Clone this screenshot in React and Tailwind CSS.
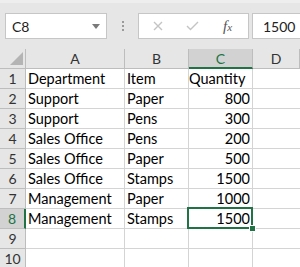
import React from "react";

const cols = [
  { key: "A", w: "w-[99px]" },
  { key: "B", w: "w-[64px]" },
  { key: "C", w: "w-[64px]" },
  { key: "D", w: "flex-1" },
];

const rows = [
  ["Department", "Item", "Quantity"],
  ["Support", "Paper", "800"],
  ["Support", "Pens", "300"],
  ["Sales Office", "Pens", "200"],
  ["Sales Office", "Paper", "500"],
  ["Sales Office", "Stamps", "1500"],
  ["Management", "Paper", "1000"],
  ["Management", "Stamps", "1500"],
  ["", "", ""],
  ["", "", ""],
];

function FormulaBar() {
  return (
    <div className="h-[49px] bg-[#e6e6e6] border-t-[3px] border-[#eeeeee] pt-[10px] flex items-start">
      <div className="ml-[5px] w-[102px] h-[26px] bg-white border border-[#c6c6c6] flex items-center pl-[6px] pr-[6px]">
        <span className="text-[14px] text-[#222]">C8</span>
        <svg className="ml-auto" width="8" height="5" viewBox="0 0 8 5">
          <path d="M0 0 L8 0 L4 5 Z" fill="#7a7a7a" />
        </svg>
      </div>
      <div className="w-[31px] h-[26px] flex flex-col items-center justify-center gap-[2px]">
        <span className="block w-[2px] h-[2px] bg-[#9a9a9a]" />
        <span className="block w-[2px] h-[2px] bg-[#9a9a9a]" />
        <span className="block w-[2px] h-[2px] bg-[#9a9a9a]" />
      </div>
      <div className="w-[111px] h-[26px] bg-white border border-[#c6c6c6] flex items-center">
        <svg className="ml-[14px]" width="10" height="10" viewBox="0 0 10 10">
          <path d="M1 1 L9 9 M9 1 L1 9" stroke="#c4c4c4" strokeWidth="1.4" />
        </svg>
        <svg className="ml-[23px]" width="13" height="10" viewBox="0 0 13 10">
          <path d="M1 5 L4.5 8.5 L12 1" stroke="#c4c4c4" strokeWidth="1.4" fill="none" />
        </svg>
        <span className="ml-[24px] text-[15px] italic text-[#555] font-['Liberation_Serif',serif]">
          f<span className="text-[11px]">x</span>
        </span>
      </div>
      <div className="ml-[3px] flex-1 h-[26px] bg-white border border-r-0 border-[#c6c6c6] flex items-center pl-[10px]">
        <span className="text-[14px] text-[#222]">1500</span>
      </div>
    </div>
  );
}

function HeaderRow() {
  return (
    <div className="flex h-[20px] bg-[#e6e6e6]">
      <div className="w-[26px] h-full border-r border-b border-[#bdbdbd] relative">
        <svg className="absolute right-[2px] bottom-[3px]" width="13" height="13" viewBox="0 0 13 13">
          <path d="M13 0 L13 13 L0 13 Z" fill="#b4b4b4" />
        </svg>
      </div>
      {cols.map((c) => {
        const sel = c.key === "C";
        return (
          <div
            key={c.key}
            className={
              c.w +
              " h-full border-r flex items-center justify-center text-[14px] " +
              (sel
                ? "bg-[#d2d2d2] border-[#bdbdbd] border-b-2 border-b-[#217346] text-[#217346]"
                : "border-[#bdbdbd] border-b text-[#333]")
            }
          >
            {c.key}
          </div>
        );
      })}
    </div>
  );
}

export default function App() {
  return (
    <div className="w-[300px] h-[267px] overflow-hidden bg-white font-['Lato',sans-serif] text-black">
      <FormulaBar />
      <HeaderRow />
      {rows.map((r, i) => {
        const n = i + 1;
        const sel = n === 8;
        return (
          <div key={n} className="flex h-[20px]">
            <div
              className={
                "w-[26px] h-full border-b flex items-center justify-center text-[14px] " +
                (sel
                  ? "bg-[#d2d2d2] border-[#bdbdbd] border-r-2 border-r-[#217346] text-[#217346]"
                  : "bg-[#e6e6e6] border-[#bdbdbd] border-r text-[#333]")
              }
            >
              {n}
            </div>
            <div className="w-[99px] h-full border-r border-b border-[#d4d4d4] flex items-center pl-[2px] text-[14.5px]">
              {r[0]}
            </div>
            <div className="w-[64px] h-full border-r border-b border-[#d4d4d4] flex items-center pl-[2px] text-[14.5px]">
              {r[1]}
            </div>
            <div className="w-[64px] h-full border-r border-b border-[#d4d4d4] flex items-center justify-end pr-[2px] text-[14.5px] relative">
              {n === 1 ? <span className="mr-auto">{r[2]}</span> : r[2]}
              {sel && (
                <>
                  <div className="absolute left-[-2px] top-[-2px] w-[66px] h-[22px] border-2 border-[#217346]" />
                  <div className="absolute right-[-4px] bottom-[-4px] w-[7px] h-[7px] bg-[#217346] border border-white z-10" />
                </>
              )}
            </div>
            <div className="flex-1 h-full border-b border-[#d4d4d4]" />
          </div>
        );
      })}
    </div>
  );
}
